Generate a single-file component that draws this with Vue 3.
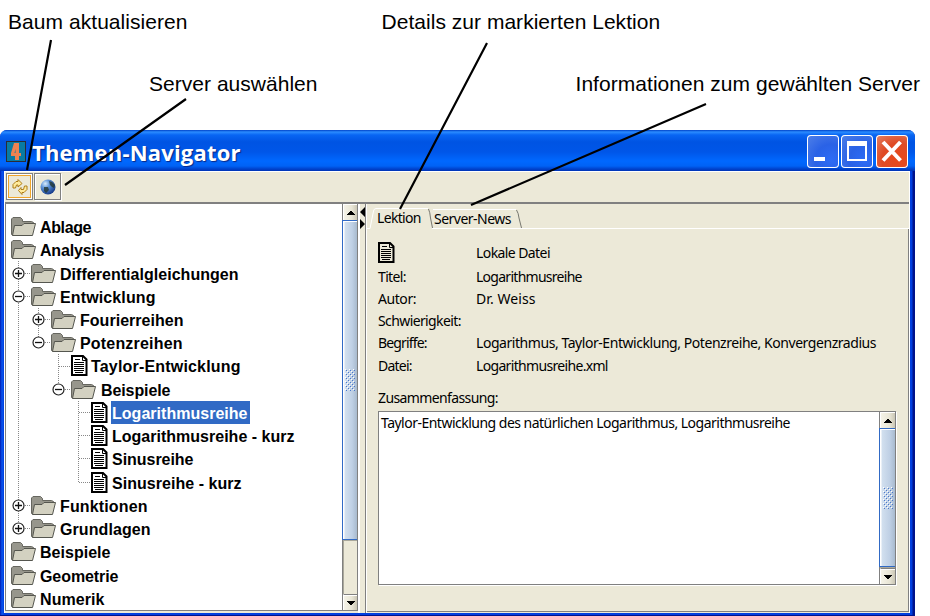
<script setup>
import { h } from 'vue'

// Spreads the letters of a label so that it occupies the given width.
const vFit = {
  mounted(el, { value }) {
    const natural = el.getBoundingClientRect().width
    el.style.letterSpacing = (value - 1.5 - natural) / (el.textContent.length - 1) + 'px'
  },
}

const tree = [
  { t: 'Ablage', d: 0, w: 53, h: 23 },
  { t: 'Analysis', d: 0, w: 66, h: 24 },
  { t: 'Differentialgleichungen', d: 1, w: 180, h: 23, toggle: '+' },
  { t: 'Entwicklung', d: 1, w: 97, h: 23, toggle: '-' },
  { t: 'Fourierreihen', d: 2, w: 105, h: 23, toggle: '+' },
  { t: 'Potenzreihen', d: 2, w: 104, h: 23, toggle: '-' },
  { t: 'Taylor-Entwicklung', d: 3, w: 151, h: 24, doc: true },
  { t: 'Beispiele', d: 3, w: 71, h: 23, toggle: '-' },
  { t: 'Logarithmusreihe', d: 4, w: 137, h: 23, doc: true, selected: true },
  { t: 'Logarithmusreihe - kurz', d: 4, w: 184, h: 23, doc: true },
  { t: 'Sinusreihe', d: 4, w: 83, h: 24, doc: true },
  { t: 'Sinusreihe - kurz', d: 4, w: 131, h: 23, doc: true },
  { t: 'Funktionen', d: 1, w: 89, h: 23, toggle: '+' },
  { t: 'Grundlagen', d: 1, w: 92, h: 23, toggle: '+' },
  { t: 'Beispiele', d: 0, w: 72, h: 24 },
  { t: 'Geometrie', d: 0, w: 80, h: 23 },
  { t: 'Numerik', d: 0, w: 66, h: 23 },
]

const details = [
  { k: 'Titel:', kw: 30, v: 'Logarithmusreihe', vw: 108, h: 22 },
  { k: 'Autor:', kw: 40, v: 'Dr. Weiss', vw: 61, h: 22 },
  { k: 'Schwierigkeit:', kw: 85, v: '', vw: 0, h: 22 },
  { k: 'Begriffe:', kw: 51, v: 'Logarithmus, Taylor-Entwicklung, Potenzreihe, Konvergenzradius', vw: 402, h: 23 },
  { k: 'Datei:', kw: 36, v: 'Logarithmusreihe.xml', vw: 134, h: 22 },
]

const DocIcon = () =>
  h('svg', { width: 17, height: 21, viewBox: '0 0 17 21' }, [
    h('path', { d: 'M1 1H12L15.5 4.500V20H1Z', fill: 'none', stroke: '#000', 'stroke-width': 2 }),
    h('path', { d: 'M11.500 1V5.500H16', fill: 'none', stroke: '#000', 'stroke-width': 1 }),
    h('path', { d: 'M4 4.500H9M3 7.500H13M3 9.500H13M3 11.500H13M3 13.500H13M3 15.500H13M4 17.500H12', stroke: '#000', 'stroke-width': 1 }),
  ])

const ScrollArrow = ({ down }) =>
  h('svg', { width: 8, height: 4, viewBox: '0 0 8 4', 'shape-rendering': 'crispEdges' }, [
    h('path', { d: down ? 'M0 0H8V1H7V2H6V3H5V4H3V3H2V2H1V1H0Z' : 'M3 0H5V1H6V2H7V3H8V4H0V3H1V2H2V1H3Z', fill: '#000' }),
  ])
ScrollArrow.props = { down: Boolean }

const Grip = () => {
  let blue = ''
  let white = ''
  for (let row = 0; row < 11; row++) {
    for (let col = row % 2; col < 5; col += 2) {
      white += `M${col * 2} ${row * 2}h1v1h-1z`
      blue += `M${col * 2 + 1} ${row * 2 + 1}h1v1h-1z`
    }
  }
  return h('svg', { width: 10, height: 22, 'shape-rendering': 'crispEdges' }, [
    h('path', { d: white, fill: '#fff' }),
    h('path', { d: blue, fill: '#4a78cc' }),
  ])
}
</script>

<template>
  <main class="sheet">
    <header class="notes">
      <div class="note-row first">
        <span v-fit="181">Baum aktualisieren</span>
        <span v-fit="280" class="n2">Details zur markierten Lektion</span>
      </div>
      <div class="note-row second">
        <span v-fit="170">Server auswählen</span>
        <span v-fit="346" class="n4">Informationen zum gewählten Server</span>
      </div>
    </header>

    <section class="window">
      <div class="titlebar">
        <svg class="app-icon" width="20" height="21" viewBox="0 0 20 21">
          <rect x="0.5" y="0.500" width="19" height="20" fill="#087ba3" stroke="#2b2b35" />
          <path d="M9 2H13V12H15V15H13V19H9V15H5V12L8 2ZM9.500 8L8.500 12H9.500Z" fill="#ef8251" fill-rule="evenodd" />
        </svg>
        <h1><span v-fit="210">Themen-Navigator</span></h1>
        <div class="win-buttons">
          <span class="wb"><svg width="32" height="33" viewBox="0 0 32 33"><rect x="7" y="22" width="11" height="4" fill="#fff" /></svg></span>
          <span class="wb"><svg width="32" height="33" viewBox="0 0 32 33"><path d="M6 6H26V26H6ZM8 11V24H24V11Z" fill="#fff" fill-rule="evenodd" /></svg></span>
          <span class="wb close"><svg width="32" height="33" viewBox="0 0 32 33"><path d="M7 7L24.500 25.500M24.500 7L7 25.500" stroke="#fff" stroke-width="4" /></svg></span>
        </div>
      </div>

      <div class="client">
        <div class="toolbar">
          <span class="tool active">
            <svg width="16" height="16" viewBox="0 0 16 16" fill="#ffeb9c" stroke="#ad7c16" stroke-width="1">
              <path d="M1 9V5.500L4 2.500H6V.5L10 4.500L6 8V6H4.500L3.500 9Z" />
              <path d="M15 7V10.500L12 13.500H10V15.500L6.500 11.500L9 8.500V10.500H11.500L12.500 7Z" />
            </svg>
          </span>
          <span class="tool">
            <svg width="16" height="16" viewBox="0 0 16 16">
              <defs>
                <radialGradient id="globe" cx=".32" cy=".28" r=".75">
                  <stop offset="0" stop-color="#d9edfb" /><stop offset=".4" stop-color="#5c93d8" /><stop offset="1" stop-color="#173c8b" />
                </radialGradient>
              </defs>
              <circle cx="8" cy="8" r="7.500" fill="url(#globe)" />
              <path d="M9 2L12 3L15 6L14 9L12 8L10 6ZM4 8L8 8L9 11L6 14L4 12Z" fill="#24372f" opacity=".8" />
            </svg>
          </span>
        </div>

        <div class="split">
          <div class="tree-pane">
            <div class="tree">
              <svg class="guides" width="100" height="400" viewBox="0 0 100 400" shape-rendering="crispEdges">
                <path d="M12.500 57V319M32.500 104V133M52.500 150V180M72.500 197V279" />
                <path d="M19 69.500H25M19 92.500H25M39 115.500H45M39 138.500H45M53 162.500H65M59 185.500H65M73 208.500H85M73 231.500H85M73 254.500H85M73 278.500H85M19 301.500H25M19 324.500H25" />
              </svg>
              <div v-for="(n, i) in tree" :key="i" class="node" :class="['d' + n.d, { doc: n.doc }]" :style="{ height: n.h + 'px' }">
                <span class="toggle-slot">
                  <svg v-if="n.toggle" width="13" height="13" viewBox="0 0 13 13">
                    <circle cx="6.500" cy="6.500" r="5.500" fill="#fff" stroke="#222" stroke-width="1.200" />
                    <path :d="n.toggle === '+' ? 'M3 6.500H10M6.500 3V10' : 'M3 6.500H10'" stroke="#111" stroke-width="1.300" />
                  </svg>
                </span>
                <DocIcon v-if="n.doc" class="icon" />
                <svg v-else class="icon" width="25" height="19" viewBox="0 0 25 19">
                  <path d="M.5 17V2L2 .5H9.500L11.500 2.500V4.500H20.500L22.500 5.500V9L20 18H1Z" fill="#97968c" stroke="#66665f" />
                  <path d="M3.500 8.500H11L13 6.500H24.500L21.500 18.500H1.500Z" fill="#d3d1c1" stroke="#55564f" />
                </svg>
                <span class="label" :class="{ selected: n.selected }"><span v-fit="n.w">{{ n.t }}</span></span>
              </div>
            </div>
            <div class="scrollbar">
              <span class="sb-btn"><ScrollArrow /></span>
              <span class="thumb"><Grip /></span>
              <span class="track"></span>
              <span class="sb-btn low"><ScrollArrow down /></span>
            </div>
          </div>

          <div class="divider">
            <svg width="6" height="32" viewBox="0 0 6 32"><path d="M5 3V13L0 8ZM0 15V25L5 20Z" fill="#000" /></svg>
          </div>

          <div class="right">
            <div class="tabs">
              <svg class="tab-lines" width="543" height="25" viewBox="0 0 543 25" fill="none">
                <path d="M0 24.500H3L6.500 7Q7 4.500 9 4.500H61M65 24.500H543M66 5.500H149" stroke="#fff" />
                <path d="M61.500 5Q63 8 63.500 14L65.500 24M149.500 6Q151.500 9 152 14L154.500 24" stroke="#77776f" />
              </svg>
              <span class="tab one"><span v-fit="46">Lektion</span></span>
              <span class="tab two"><span v-fit="79">Server-News</span></span>
            </div>
            <div class="panel">
              <div class="row source"><span class="key"><DocIcon /></span><span v-fit="76">Lokale Datei</span></div>
              <div v-for="r in details" :key="r.k" class="row" :style="{ height: r.h + 'px' }">
                <span class="key"><span v-fit="r.kw">{{ r.k }}</span></span>
                <span v-if="r.v" v-fit="r.vw">{{ r.v }}</span>
              </div>
              <div class="row summary"><span v-fit="122">Zusammenfassung:</span></div>
              <div class="textbox">
                <p><span v-fit="411">Taylor-Entwicklung des natürlichen Logarithmus, Logarithmusreihe</span></p>
                <div class="scrollbar small">
                  <span class="sb-btn"><ScrollArrow /></span>
                  <span class="thumb"><Grip /></span>
                  <span class="track"></span>
                  <span class="sb-btn low"><ScrollArrow down /></span>
                </div>
              </div>
            </div>
          </div>
        </div>
      </div>
    </section>

    <svg class="pointers" width="930" height="616" viewBox="0 0 930 616" stroke="#000" stroke-width="2.200">
      <path d="M51 40L27 170M186 99L65 185M487 43L400 209M706 104L471 205" />
    </svg>
  </main>
</template>

<style>
body { margin: 0; background: #fff; }
</style>

<style scoped>
* { box-sizing: border-box; }
.sheet { position: relative; width: 930px; height: 616px; overflow: hidden; background: #fff; color: #000; white-space: nowrap; }
.sheet svg { display: block; flex: none; }
.pointers { position: absolute; inset: 0; pointer-events: none; }

.notes { height: 130px; padding-top: 9px; font: 21px/26px "Liberation Sans", Arial, sans-serif; }
.note-row { display: flex; height: 62px; }
.note-row span { flex: none; }
.first { padding-left: 8px; }
.second { padding-left: 149px; }
.n2 { margin-left: 194px; }
.n4 { margin-left: 258px; }

.window { width: 915px; height: 486px; padding: 0 5px 3px 4px; border-radius: 7px 7px 0 0; background: linear-gradient(90deg, #001bb4 0, #0a55ee 2px, #003fe0 4px, #003fe0 912px, #00138c 913px); box-shadow: inset 0 -1px #00138c; }
.titlebar { display: flex; height: 41px; margin: 0 -5px 0 -4px; padding: 5px 7px 0 6px; border-radius: 7px 7px 0 0; background: linear-gradient(#0042c8 0, #2b8cff 2px, #0865f3 5px, #0054e3 12px, #0056e8 22px, #0068ff 31px, #0062f5 36px, #0042cc 39px, #0034b6 41px); }
.app-icon { margin-top: 6px; }
h1 { flex: 1; margin: 0 0 0 6px; color: #fff; font: bold 22px/34px "Open Sans", "Noto Sans", sans-serif; text-shadow: 1px 1px 1px #082784; }
h1 span { display: inline-block; }
.win-buttons { display: flex; gap: 2px; }
.wb { flex: none; width: 32px; height: 33px; border-radius: 4px; background: radial-gradient(circle at 75% 75%, #2e6cf5, #2a62e6 45%, #5081e8 100%); box-shadow: inset 0 0 0 1px #fff; }
.close { margin-left: 1px; background: radial-gradient(circle at 70% 75%, #e8481a, #df4b25 50%, #e48468 100%); }

.client { height: 442px; width: 906px; background: #ece9d8; border-top: 1px solid #fff; border-left: 1px solid #fff; border-right: 1px solid #fff; font: 14px/22px "Noto Sans", "Open Sans", sans-serif; }
.toolbar { display: flex; gap: 1px; height: 32px; padding: 1px; border-bottom: 2px solid #808080; }
.tool { display: grid; place-items: center; flex: none; width: 27px; height: 27px; border: 1px solid #808080; box-shadow: inset 1px 1px #fff, 1px 1px #fff; }
.active { box-shadow: inset 0 0 0 1px #fff, inset 0 0 0 2px #f0a52a; }
.split { display: flex; height: 409px; }
.tree-pane { display: flex; flex: none; width: 353px; height: 407px; background: #fff; border-left: 1px solid #808080; border-right: 1px solid #808080; border-bottom: 1px solid #808080; }
.tree { position: relative; flex: none; width: 336px; padding-top: 11px; font: bold 16px/25px "Liberation Sans", Arial, sans-serif; overflow: hidden; }
.guides { position: absolute; left: 0; top: 0; fill: none; stroke: #888; stroke-dasharray: 1 1; }
.node { position: relative; display: flex; }
.d1 { padding-left: 6px; }
.d2 { padding-left: 26px; }
.d3 { padding-left: 46px; }
.d4 { padding-left: 66px; }
.toggle-slot { flex: none; width: 19px; padding-top: 5px; }
.d0 .toggle-slot { width: 5px; }
.icon { margin-top: 2px; }
.doc .icon { margin-top: 1px; }
.label { flex: none; height: 23px; margin-left: 3px; padding: 0 1px; }
.d3 .label { margin-left: 4px; }
.d3.doc .label { margin-left: 2px; }
.label > span { display: inline-block; }
.selected { padding-right: 2px; background: #316ac5; color: #fff; }

.scrollbar { display: flex; flex: none; flex-direction: column; width: 15px; height: 406px; border-left: 1px solid #808080; background: #ece9d8; }
.sb-btn { display: grid; place-items: center; flex: none; height: 16px; border-top: 1px solid #fff; border-left: 1px solid #fff; background: linear-gradient(90deg, #f5f3e8, #e9e6d6 60%, #cac6b5); }
.low { border-top: 1px solid #808080; box-shadow: inset 0 1px #fff; }
.thumb { display: grid; place-items: center; flex: none; height: 320px; margin-left: -1px; border: 1px solid #316ac5; border-right: 0; background: linear-gradient(90deg, #fff 0 1px, #d2e0ef 2px, #bfd0e5 65%, #a8bace); box-shadow: inset 0 1px #fff; }
.track { flex: 1; box-shadow: inset 1px 1px #aaa89b; }
.divider { flex: none; width: 8px; border-left: 2px solid #fff; border-right: 1px solid #808080; }
.right { flex: none; width: 543px; border-left: 1px solid #fff; }
.tabs { position: relative; display: flex; height: 25px; }
.tab-lines { position: absolute; left: 0; top: 0; }
.tab { flex: none; padding-top: 3px; }
.tab > span { display: inline-block; }
.one { width: 57px; margin-left: 10px; }
.two { padding-top: 4px; }
.panel { width: 542px; height: 383px; padding: 13px 0 0 11px; border-right: 1px solid #808080; border-bottom: 1px solid #808080; }
.row { display: flex; line-height: 22px; }
.row > span { flex: none; }
.source { height: 24px; }
.key { width: 98px; }
.key > span { display: inline-block; }
.summary { height: 24px; margin-top: 10px; }
.textbox { display: flex; width: 518px; height: 174px; border: 1px solid #808080; box-shadow: 1px 1px #fff; background: #fff; }
.textbox p { flex: 1; margin: 0; padding-left: 2px; }
.textbox p span { display: inline-block; }
.small { width: 16px; height: 172px; }
.small .thumb { height: 139px; }
</style>
